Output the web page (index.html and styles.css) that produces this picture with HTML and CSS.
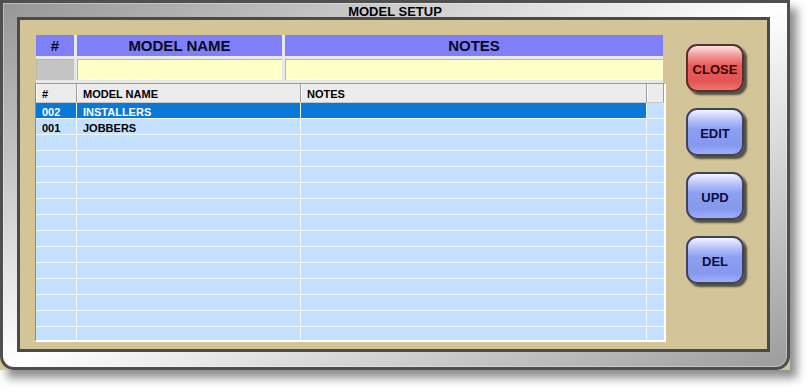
FILE: index.html
```html
<!DOCTYPE html>
<html lang="en">
  <head>
    <meta charset="UTF-8" />
    <title>Model Setup</title>
    <link rel="stylesheet" href="styles.css">
  </head>
  <body>
    <div class="frame-wrap">
      <div class="frame">
        <div class="title">MODEL SETUP</div>
        <div class="panel">
          <div class="list-area">
            <!-- en-tete + ligne de filtre -->
            <div class="head-grid">
              <div class="hcell">#</div>
              <div class="hcell">MODEL NAME</div>
              <div class="hcell">NOTES</div>
              <div class="fcell fcell-num"></div>
              <div class="fcell"></div>
              <div class="fcell"></div>
            </div>
            <div class="grid">
              <table>
                <colgroup>
                  <col class="c-num" />
                  <col class="c-name" />
                  <col class="c-notes" />
                  <col class="c-end" />
                </colgroup>
                <thead>
                  <tr>
                    <th>#</th>
                    <th>MODEL NAME</th>
                    <th>NOTES</th>
                    <th></th>
                  </tr>
                </thead>
                <tbody>
                  <tr class="selected">
                    <td>002</td>
                    <td>INSTALLERS</td>
                    <td></td>
                    <td></td>
                  </tr>
                  <tr>
                    <td>001</td>
                    <td>JOBBERS</td>
                    <td></td>
                    <td></td>
                  </tr>
                  <tr><td></td><td></td><td></td><td></td></tr>
                  <tr><td></td><td></td><td></td><td></td></tr>
                  <tr><td></td><td></td><td></td><td></td></tr>
                  <tr><td></td><td></td><td></td><td></td></tr>
                  <tr><td></td><td></td><td></td><td></td></tr>
                  <tr><td></td><td></td><td></td><td></td></tr>
                  <tr><td></td><td></td><td></td><td></td></tr>
                  <tr><td></td><td></td><td></td><td></td></tr>
                  <tr><td></td><td></td><td></td><td></td></tr>
                  <tr><td></td><td></td><td></td><td></td></tr>
                  <tr><td></td><td></td><td></td><td></td></tr>
                  <tr><td></td><td></td><td></td><td></td></tr>
                  <tr><td></td><td></td><td></td><td></td></tr>
                </tbody>
              </table>
            </div>
          </div>
          <div class="buttons">
            <button class="btn btn-red">CLOSE</button>
            <button class="btn">EDIT</button>
            <button class="btn">UPD</button>
            <button class="btn">DEL</button>
          </div>
        </div>
      </div>
    </div>
  </body>
</html>
```

FILE: styles.css
```css
body {
  margin: 0;
  padding: 0 0 22px 0;
  background-color: #fff;
  font-family: "Liberation Sans", Arial, sans-serif;
}
.frame-wrap {
  width: 790px;
  height: 370px;
  background-color: #d3c598;
  box-shadow: 7px 8px 9px rgba(0, 0, 0, 0.45);
}
.frame {
  box-sizing: border-box;
  width: 790px;
  height: 370px;
  border: 3px solid #4f4f4f;
  border-radius: 0 0 14px 14px;
  background: linear-gradient(to bottom right, #969696, #fff 50%, #9c9c9c);
  box-shadow: inset 0 0 0 1px rgba(255, 255, 255, 0.35);
}
.title {
  height: 12px;
  padding-top: 2px;
  line-height: 14px;
  font-size: 13px;
  font-weight: bold;
  text-align: center;
  color: #000;
}
.panel {
  box-sizing: border-box;
  width: 753px;
  height: 335px;
  margin-left: 14px;
  border: 3px solid #4a4a4a;
  background-color: #d3c598;
  padding: 15px 0 0 15px;
  display: flex;
}
.list-area {
  width: 631px;
}
.head-grid {
  display: grid;
  grid-template-columns: 38px 205px 378px;
  grid-template-rows: 21px 21px;
  gap: 3px;
  width: 627px;
  margin-left: 1px;
  padding-bottom: 3px;
  background-color: #e8e8e8;
}
.hcell {
  background-color: #7f7ff7;
  line-height: 21px;
  font-size: 15px;
  font-weight: bold;
  text-align: center;
  color: #0a0a1e;
}
.fcell {
  background-color: #ffffc8;
  box-shadow: inset 1px 1px #b8b8a0;
}
.fcell-num {
  background-color: #c4c4c4;
}
.grid {
  height: 256px;
  overflow: hidden;
  border-left: 1px solid #8a8a8a;
  border-top: 1px solid #9a9a9a;
  border-right: 2px solid #fff;
  border-bottom: 2px solid #fff;
  background-color: #c4e0ff;
}
table {
  width: 628px;
  table-layout: fixed;
  border-collapse: separate;
  border-spacing: 0;
  font-size: 11px;
  font-weight: bold;
}
.c-num {
  width: 41px;
}
.c-name {
  width: 224px;
}
.c-notes {
  width: 346px;
}
.c-end {
  width: 17px;
}
th {
  background-color: #ececec;
  padding: 2px 0 0 6px;
  line-height: 16px;
  border-bottom: 1px solid #c8c8c8;
  text-align: left;
  color: #000;
  box-shadow: inset -1px 0 #9c9c9c, inset 1px 0 #fff;
}
tbody tr {
  height: 16px;
}
td {
  padding: 3px 0 0 6px;
  line-height: 12px;
  border-bottom: 1px solid #f4f9ff;
  border-right: 1px solid #f4f9ff;
  color: #000;
  white-space: nowrap;
  overflow: hidden;
}
td:last-child {
  border-right: none;
}
.selected td {
  background-color: #0a78d6;
  color: #fff;
}
.selected td:last-child {
  background-color: #c4e0ff;
}
.buttons {
  display: flex;
  flex-direction: column;
  gap: 16px;
  margin-left: 20px;
  padding-top: 9px;
}
.btn {
  box-sizing: border-box;
  width: 58px;
  height: 48px;
  padding: 3px 0 0 0;
  border: 2px solid #3d4262;
  border-radius: 11px;
  background: linear-gradient(#f4f6ff 0%, #bcc7fb 20%, #8d9ff1 44%, #8698ee 80%, #9eaef4 100%);
  box-shadow: 3px 3px 2px rgba(40, 40, 40, 0.75);
  font-family: "Liberation Sans", Arial, sans-serif;
  font-size: 13px;
  font-weight: bold;
  color: #0c0c3c;
  cursor: pointer;
}
.btn-red {
  border-color: #5a2e2e;
  background: linear-gradient(#ffe4e4 0%, #f49e9e 20%, #e85c5c 44%, #e35454 80%, #ee7474 100%);
  color: #3a0606;
}
```
